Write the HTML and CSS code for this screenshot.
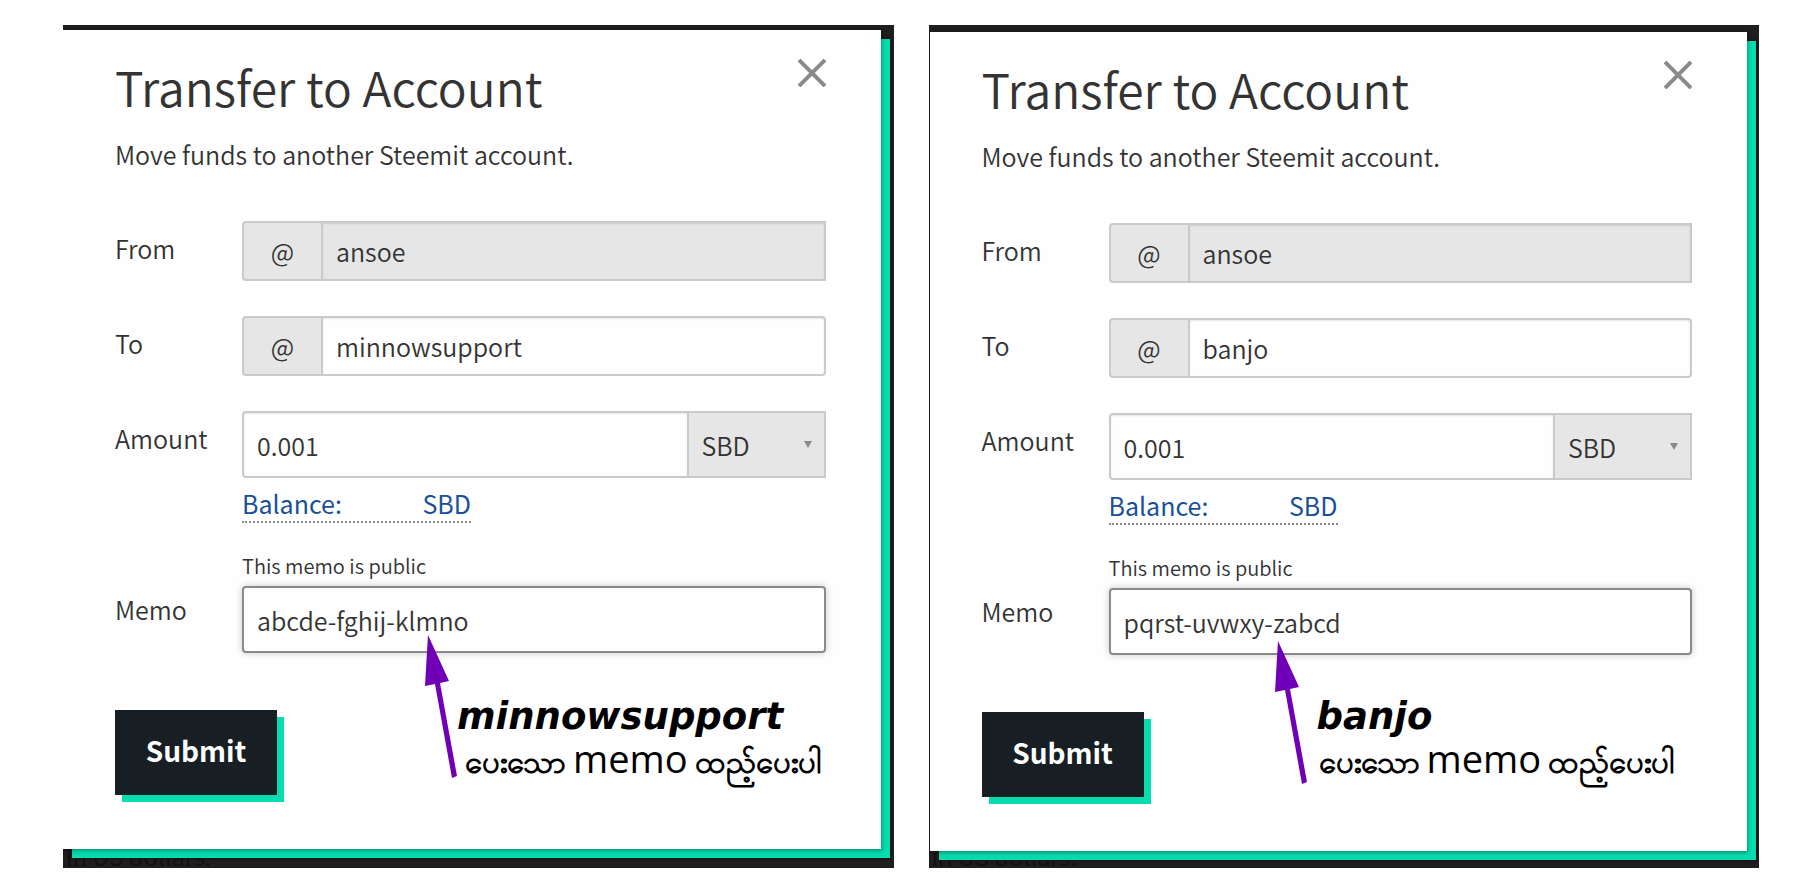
FILE: index.html
```html
<!DOCTYPE html>
<html lang="en">
<head>
    <meta charset="UTF-8">
    <meta name="viewport" content="width=device-width, initial-scale=1.0">
    <title>Transfer to Account</title>
    <link rel="stylesheet" href="styles.css">
</head>
<body>

<main class="panels">
    <section class="panel panel-left">
        <p class="backdrop-text">in US dollars.</p>
        <form class="modal">
            <button type="button" class="close" aria-label="Close">
                <svg width="28" height="28" viewBox="0 0 28 28"><path d="M1 1L27 27M27 1L1 27"/></svg>
            </button>
            <h1>Transfer to Account</h1>
            <p class="intro">Move funds to another Steemit account.</p>

            <div class="row">
                <label for="from1">From</label>
                <div class="group">
                    <span class="prefix">@</span>
                    <input type="text" id="from1" class="disabled" value="ansoe" readonly>
                </div>
            </div>
            <div class="row">
                <label for="to1">To</label>
                <div class="group">
                    <span class="prefix">@</span>
                    <input type="text" id="to1" value="minnowsupport">
                </div>
            </div>
            <div class="row row-amount">
                <label for="amount1">Amount</label>
                <div class="group tall">
                    <input type="text" id="amount1" value="0.001">
                    <span class="select">
                        <select aria-label="Asset"><option>SBD</option><option>STEEM</option></select>
                    </span>
                </div>
            </div>
            <a href="#" class="balance"><span>Balance:</span><span>SBD</span></a>
            <p class="hint">This memo is public</p>
            <div class="row row-memo">
                <label for="memo1">Memo</label>
                <div class="group tall memo">
                    <input type="text" id="memo1" value="abcde-fghij-klmno">
                </div>
            </div>
            <button type="submit" class="submit">Submit</button>
        </form>

        <!-- Arrow and note over the dialog -->
        <svg class="arrow" width="32" height="144" viewBox="0 0 32 144"><path d="M3 0L24 46L15 48L32 141L27 143L10 49L0 51Z"/></svg>
        <div class="note">
            <strong>minnowsupport</strong>
            <p lang="my">ပေးသော <span>memo</span> ထည့်ပေးပါ</p>
        </div>
    </section>

    <section class="panel panel-right">
        <p class="backdrop-text">in US dollars.</p>
        <form class="modal">
            <button type="button" class="close" aria-label="Close">
                <svg width="28" height="28" viewBox="0 0 28 28"><path d="M1 1L27 27M27 1L1 27"/></svg>
            </button>
            <h1>Transfer to Account</h1>
            <p class="intro">Move funds to another Steemit account.</p>

            <div class="row">
                <label for="from2">From</label>
                <div class="group">
                    <span class="prefix">@</span>
                    <input type="text" id="from2" class="disabled" value="ansoe" readonly>
                </div>
            </div>
            <div class="row">
                <label for="to2">To</label>
                <div class="group">
                    <span class="prefix">@</span>
                    <input type="text" id="to2" value="banjo">
                </div>
            </div>
            <div class="row row-amount">
                <label for="amount2">Amount</label>
                <div class="group tall">
                    <input type="text" id="amount2" value="0.001">
                    <span class="select">
                        <select aria-label="Asset"><option>SBD</option><option>STEEM</option></select>
                    </span>
                </div>
            </div>
            <a href="#" class="balance"><span>Balance:</span><span>SBD</span></a>
            <p class="hint">This memo is public</p>
            <div class="row row-memo">
                <label for="memo2">Memo</label>
                <div class="group tall memo">
                    <input type="text" id="memo2" value="pqrst-uvwxy-zabcd">
                </div>
            </div>
            <button type="submit" class="submit">Submit</button>
        </form>

        <svg class="arrow" width="32" height="144" viewBox="0 0 32 144"><path d="M3 0L24 46L15 48L32 141L27 143L10 49L0 51Z"/></svg>
        <div class="note">
            <strong>banjo</strong>
            <p lang="my">ပေးသော <span>memo</span> ထည့်ပေးပါ</p>
        </div>
    </section>
</main>

</body>
</html>
```
FILE: styles.css
```css
* {
    box-sizing: border-box;
}

body {
    margin: 0;
    padding: 25px 47px 24px 63px;
    background-color: #fff;
    color: #333;
    font-family: "Noto Sans CJK SC", "Open Sans", sans-serif;
    font-size: 25px;
    font-weight: 350;
}

h1, p {
    margin: 0;
}

.panels {
    display: flex;
    gap: 35px;
}

.panel {
    position: relative;
    flex: 1;
    overflow: hidden;
    background-color: #1e1e1e;
}

.panel-left {
    padding: 5px 13px 19px 0;
}

.panel-right {
    padding: 7px 12px 16px 1px;
}

.backdrop-text {
    position: absolute;
    left: 3px;
    bottom: 0;
    color: #111;
    font-size: 24px;
    line-height: 24px;
}

.modal {
    position: relative;
    padding: 26px 55px 54px 52px;
    background-color: #fefefe;
    box-shadow: 0 1px 4px 1px rgba(0, 0, 0, 0.3), 9px 9px 0 #06dcae, 9px 9px 2px 1px #111;
}

.close {
    position: absolute;
    top: 29px;
    right: 55px;
    display: flex;
    padding: 0;
    border: none;
    background: none;
    cursor: pointer;
}

.close path {
    fill: none;
    stroke: #8a8a8a;
    stroke-width: 4;
}

h1 {
    font-size: 48px;
    font-weight: 350;
    line-height: 60px;
}

.intro {
    margin: 20px 0 48px;
    line-height: 37px;
}

.row {
    display: flex;
    margin-bottom: 35px;
}

.row label {
    width: 127px;
    padding-top: 9px;
    line-height: 37px;
}

.row-amount {
    margin-bottom: 0;
}

.row-memo label {
    padding-top: 5px;
}

.group {
    display: flex;
    flex: 1;
    height: 60px;
}

.tall {
    height: 67px;
}

.prefix {
    display: flex;
    align-items: center;
    justify-content: center;
    width: 79px;
    border: 2px solid #cacaca;
    border-right: none;
    border-radius: 4px 0 0 4px;
    background-color: #e6e6e6;
}

input, select {
    min-width: 0;
    margin: 0;
    padding: 0 13px;
    border: 2px solid #cacaca;
    background-color: #fefefe;
    color: #333;
    font: inherit;
}

input {
    flex: 1;
    border-radius: 0 4px 4px 0;
    box-shadow: inset 0 1px 2px rgba(10, 10, 10, 0.1);
}

.tall input {
    border-radius: 4px 0 0 4px;
}

.disabled {
    border-radius: 0;
    background-color: #e6e6e6;
}

.memo input {
    border-color: #8a8a8a;
    border-radius: 4px;
    box-shadow: 0 0 7px #cacaca;
}

.select {
    position: relative;
    display: flex;
    width: 137px;
}

.select select {
    flex: 1;
    border-left: none;
    border-radius: 0;
    background-color: #e6e6e6;
    appearance: none;
}

.select::after {
    content: "";
    position: absolute;
    top: 30px;
    right: 14px;
    border: 4px solid transparent;
    border-top: 7px solid #8a8a8a;
    border-bottom: none;
}

.balance {
    display: flex;
    justify-content: space-between;
    width: 229px;
    margin: 8px 0 0 127px;
    border-bottom: 2px dotted #8a8a8a;
    color: #1a5099;
    font-weight: 400;
    line-height: 35px;
    text-decoration: none;
}

.hint {
    margin: 27px 0 4px 127px;
    font-size: 20px;
    line-height: 32px;
}

.submit {
    display: block;
    width: 162px;
    height: 85px;
    margin-top: 57px;
    padding: 0 0 5px;
    border: none;
    background-color: #171f24;
    box-shadow: 7px 7px 0 #06dcae;
    color: #fff;
    font-family: "Noto Sans CJK SC", sans-serif;
    font-size: 28px;
    font-weight: bold;
    cursor: pointer;
}

.arrow {
    position: absolute;
    top: 610px;
    left: 362px;
    fill: #7000b8;
}

.note {
    position: absolute;
    top: 665px;
    left: 394px;
    color: #000;
    white-space: nowrap;
}

.note strong {
    display: block;
    font-family: "DejaVu Sans", sans-serif;
    font-size: 37px;
    font-style: italic;
    font-weight: bold;
    line-height: 54px;
}

.note p {
    padding-left: 8px;
    font-size: 31px;
    font-weight: 600;
    line-height: 28px;
}

.note span {
    font-family: "Open Sans", sans-serif;
    font-size: 38px;
    font-weight: 400;
}

.panel-right .arrow {
    top: 616px;
    left: 346px;
}

.panel-right .note {
    left: 388px;
}

.panel-right .note p {
    padding-left: 2px;
}
```
